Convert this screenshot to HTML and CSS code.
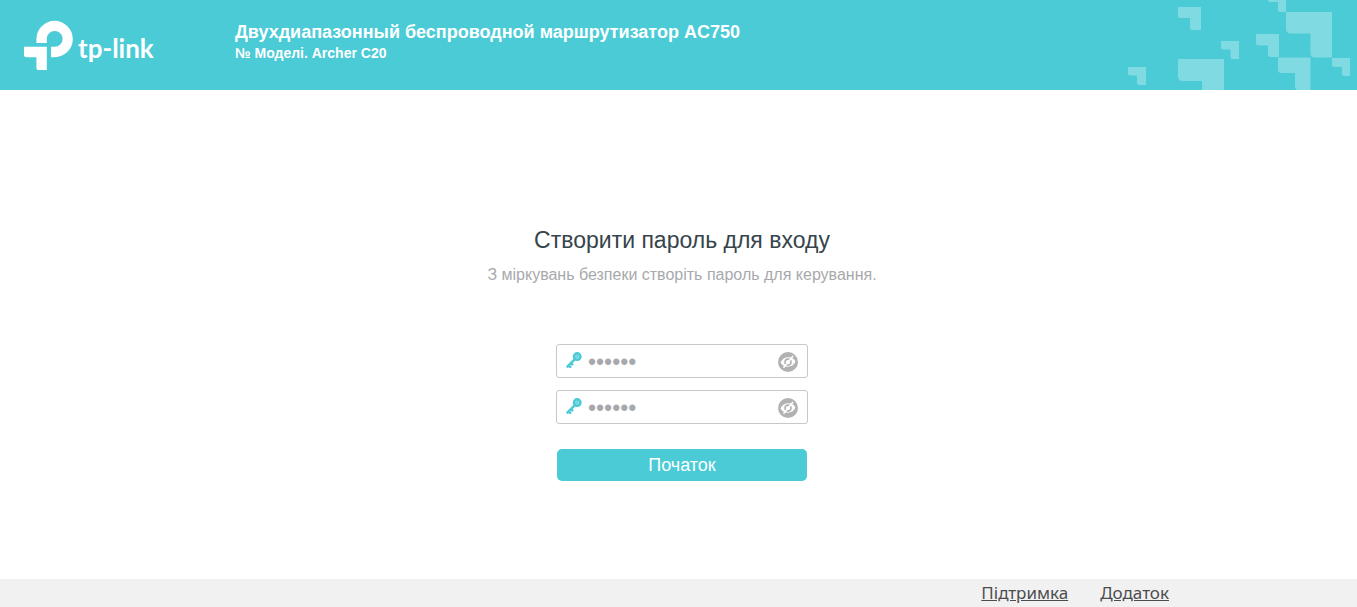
FILE: index.html
```html
<!DOCTYPE html>
<html lang="uk">
<head>
  <meta charset="UTF-8" />
  <meta name="viewport" content="width=device-width, initial-scale=1.0"/>
  <title>Archer C20</title>
  <link rel="stylesheet" href="styles.css">
</head>
<body>
  <header class="header">
    <svg class="logo" width="140" height="60" viewBox="20 16 140 60" role="img" aria-label="tp-link">
      <path fill="#fff" d="M36.4 43V39A18.2 18.2 0 1 1 54.6 57.2H51V46.8H54.6A7.9 7.9 0 1 0 46.8 39V43Z"/>
      <path fill="#fff" d="M24 46.8H46.8V70H39Q36.4 70 36.4 67.4V57.2H26.5Q24 57.2 24 54.7Z"/>
      <text class="logo-text" x="78" y="58">tp-link</text>
    </svg>
    <div class="titles">
      <h1>Двухдиапазонный беспроводной маршрутизатор AC750</h1>
      <p>№ Моделі. Archer C20</p>
    </div>
    <svg class="pattern" width="247" height="90" viewBox="1110 0 247 90" aria-hidden="true">
      <g fill="#fff" fill-opacity="0.3">
        <path d="M1178 7H1201V30H1192.500Q1190 30 1190 27.500V18H1180.500Q1178 18 1178 15.500Z"/>
        <path d="M1221 41H1239V59H1232.500Q1230.500 59 1230.500 57V49.500H1223Q1221 49.500 1221 47.500Z"/>
        <path d="M1128 67H1146V85H1139Q1137 85 1137 83V75.500H1130Q1128 75.500 1128 73.500Z"/>
        <path d="M1178 59H1224V90H1202V81H1183Q1178 81 1178 76Z"/>
        <path d="M1256 34H1279V57H1270.500Q1268 57 1268 54.500V45.500H1258.500Q1256 45.500 1256 43Z"/>
        <path d="M1268 0H1286V12H1280Q1278 12 1278 10V2H1270Q1268 2 1268 0Z"/>
        <path d="M1286 12H1332V57.500H1315Q1310.500 57.500 1310.500 53V33.500H1291Q1286 33.500 1286 28.500Z"/>
        <path d="M1278 57.500H1310.500V90H1298.500Q1295 90 1295 86.500V73H1281.500Q1278 73 1278 69.500Z"/>
        <path d="M1332 58H1350V76H1344Q1342 76 1342 74V67H1334Q1332 67 1332 65Z"/>
      </g>
    </svg>
  </header>

  <main class="content">
    <h2>Створити пароль для входу</h2>
    <p class="note">З міркувань безпеки створіть пароль для керування.</p>

    <form class="form">
      <div class="field">
        <svg class="key" width="16" height="16" viewBox="0 0 16 16" aria-hidden="true">
          <circle cx="11.200" cy="4.600" r="3.200" fill="#a5e5ea" stroke="#4acbd6" stroke-width="2.600"/>
          <circle cx="11.200" cy="4.600" r="1" fill="#4acbd6"/>
          <path fill="none" stroke="#4acbd6" stroke-width="2.400" d="M8.700 7.300L0.700 15.300M2.300 13.200L5 15.900M4.800 11L7 13.200"/>
        </svg>
        <input type="password" id="newPassword" value="123456" aria-label="Пароль">
        <button type="button" class="eye" aria-label="Показати пароль" onclick="togglePassword('newPassword')">
          <svg width="20" height="20" viewBox="0 0 20 20">
            <circle cx="10" cy="10" r="10" fill="#b2b2b2"/>
            <path fill="#fff" d="M2.500 10.500C5 4 14.500 3.500 17.500 9.500C15 16 5.500 16.500 2.500 10.500Z"/>
            <ellipse cx="10" cy="10.100" rx="3" ry="3" fill="#fff" stroke="#b2b2b2" stroke-width="1.600"/>
            <path stroke="#fff" stroke-width="1.600" d="M5.500 15.700L15 4"/>
          </svg>
        </button>
      </div>
      <div class="field">
        <svg class="key" width="16" height="16" viewBox="0 0 16 16" aria-hidden="true">
          <circle cx="11.200" cy="4.600" r="3.200" fill="#a5e5ea" stroke="#4acbd6" stroke-width="2.600"/>
          <circle cx="11.200" cy="4.600" r="1" fill="#4acbd6"/>
          <path fill="none" stroke="#4acbd6" stroke-width="2.400" d="M8.700 7.300L0.700 15.300M2.300 13.200L5 15.900M4.800 11L7 13.200"/>
        </svg>
        <input type="password" id="confirmPassword" value="123456" aria-label="Підтвердити пароль">
        <button type="button" class="eye" aria-label="Показати пароль" onclick="togglePassword('confirmPassword')">
          <svg width="20" height="20" viewBox="0 0 20 20">
            <circle cx="10" cy="10" r="10" fill="#b2b2b2"/>
            <path fill="#fff" d="M2.500 10.500C5 4 14.500 3.500 17.500 9.500C15 16 5.500 16.500 2.500 10.500Z"/>
            <ellipse cx="10" cy="10.100" rx="3" ry="3" fill="#fff" stroke="#b2b2b2" stroke-width="1.600"/>
            <path stroke="#fff" stroke-width="1.600" d="M5.500 15.700L15 4"/>
          </svg>
        </button>
      </div>
      <button type="button" class="start">Початок</button>
    </form>
  </main>

  <footer class="footer">
    <a href="#support">Підтримка</a>
    <a href="#app">Додаток</a>
  </footer>

  <script>
    function togglePassword(id) {
      const input = document.getElementById(id);
      input.type = input.type === "password" ? "text" : "password";
    }
  </script>
</body>
</html>
```

FILE: styles.css
```css
* {
  box-sizing: border-box;
}

body {
  margin: 0;
  min-height: 100vh;
  display: flex;
  flex-direction: column;
  font-family: "Liberation Sans", Arial, sans-serif;
  background-color: #fff;
}

h1, h2, p {
  margin: 0;
}

.header {
  display: flex;
  align-items: flex-start;
  height: 90px;
  padding-left: 20px;
  background-color: #4acbd6;
  color: #fff;
}

.logo {
  margin-top: 16px;
  flex-shrink: 0;
}

.logo-text {
  font-family: Lato, sans-serif;
  font-size: 26px;
  font-weight: bold;
  fill: #fff;
}

.titles {
  flex: 1;
  padding: 20px 0 0 75px;
}

.titles h1 {
  font-size: 18px;
  line-height: 24px;
}

.titles p {
  font-size: 14px;
  font-weight: bold;
  line-height: 18px;
}

.pattern {
  flex-shrink: 0;
}

.content {
  flex: 1;
  display: flex;
  flex-direction: column;
  align-items: center;
  padding: 134px 0 24px 7px;
}

.content h2 {
  font-size: 23px;
  font-weight: normal;
  line-height: 32px;
  color: #36444b;
}

.note {
  margin-top: 9px;
  font-size: 16px;
  line-height: 20px;
  color: #a7a9ac;
}

.form {
  display: flex;
  flex-direction: column;
  align-items: center;
  gap: 12px;
  margin-top: 59px;
}

.field {
  display: flex;
  align-items: center;
  width: 252px;
  height: 34px;
  padding: 1px 9px 0;
  border: 1px solid #c8c8c8;
  border-radius: 3px;
}

.key {
  flex-shrink: 0;
  margin-bottom: 3px;
}

.field input {
  flex: 1;
  min-width: 0;
  height: 30px;
  padding: 2px 6px 0;
  border: none;
  outline: none;
  background: none;
  font-family: "Liberation Sans", Arial, sans-serif;
  font-size: 23px;
  color: #a7a9ac;
}

.eye {
  display: flex;
  padding: 0;
  border: none;
  background: none;
  cursor: pointer;
}

.start {
  width: 250px;
  height: 32px;
  margin-top: 13px;
  padding: 0;
  border: none;
  border-radius: 5px;
  background-color: #4acbd6;
  color: #fff;
  font-family: "Liberation Sans", Arial, sans-serif;
  font-size: 18px;
  cursor: pointer;
}

.start:hover {
  background-color: #3dbcc7;
}

.footer {
  display: flex;
  justify-content: flex-end;
  gap: 32px;
  padding: 4px 188px 4px 0;
  background-color: #f1f1f1;
}

.footer a {
  font-family: "Noto Sans", Tahoma, sans-serif;
  font-size: 17px;
  line-height: 20px;
  color: #4d4d4f;
}
```
